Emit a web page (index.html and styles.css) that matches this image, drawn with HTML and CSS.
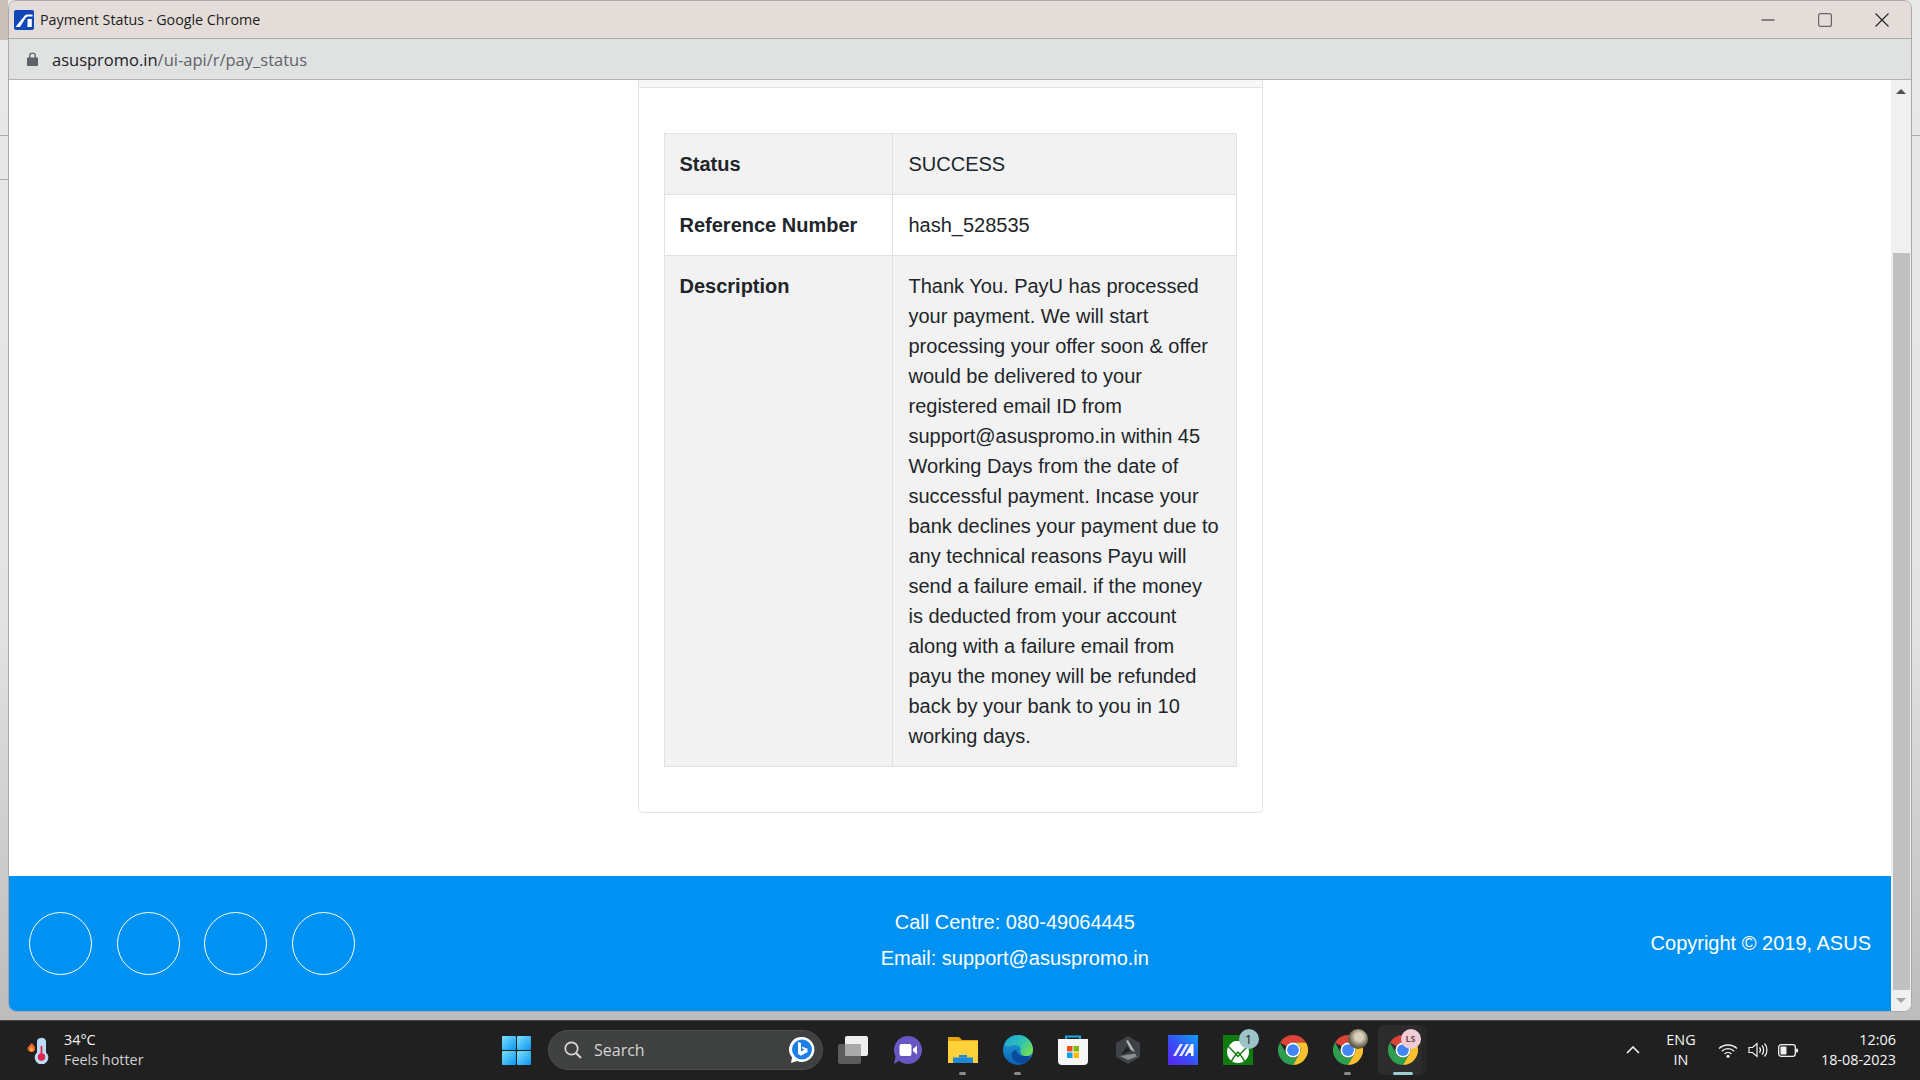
FILE: index.html
```html
<!DOCTYPE html>
<html lang="en">
<head>
    <meta charset="UTF-8">
    <title>Payment Status - Google Chrome</title>
    <link rel="stylesheet" href="styles.css">
</head>
<body>
    <svg class="defs" width="0" height="0">
        <defs>
            <symbol id="chrome" viewBox="0 0 24 24">
                <path fill="#db4437" d="M12 0A12 12 0 0 1 22.4 6H12A6 6 0 0 0 6.8 9L1.6 6A12 12 0 0 1 12 0Z"/>
                <path fill="#2e9e4f" d="M1.6 6L6.8 15A6 6 0 0 0 17.2 15L12 24A12 12 0 0 1 1.6 6Z"/>
                <path fill="#fbc02d" d="M12 6H22.4A12 12 0 0 1 12 24L17.2 15A6 6 0 0 0 12 6Z"/>
                <circle cx="12" cy="12" r="6" fill="#fff"/>
                <circle cx="12" cy="12" r="4.7" fill="#4285f4"/>
            </symbol>
            <linearGradient id="edgeBlue" x1="0" y1="0" x2="0" y2="1">
                <stop offset="0" stop-color="#1fa4e0"/>
                <stop offset="1" stop-color="#0c5fb0"/>
            </linearGradient>
            <linearGradient id="edgeGreen" x1="0" y1="0" x2="1" y2="0.6">
                <stop offset="0" stop-color="#1c9fdc"/>
                <stop offset="0.6" stop-color="#2fc3b0"/>
                <stop offset="1" stop-color="#6fdc5a"/>
            </linearGradient>
            <linearGradient id="winTile" x1="0" y1="0" x2="1" y2="1">
                <stop offset="0" stop-color="#7be2ff"/>
                <stop offset="1" stop-color="#0a94f0"/>
            </linearGradient>
            <linearGradient id="maBg" x1="1" y1="0" x2="0" y2="1">
                <stop offset="0" stop-color="#0aa0ff"/>
                <stop offset="0.55" stop-color="#3a4cf5"/>
                <stop offset="1" stop-color="#5a22f0"/>
            </linearGradient>
        </defs>
    </svg>

    <div class="desktop">
        <div class="window">
            <div class="titlebar">
                <svg class="favicon" viewBox="0 0 20 20">
                    <rect width="20" height="20" rx="2" fill="#0f47b8"/>
                    <path fill="#fff" d="M1.5 17L10 6.5C11 5 12 4.5 14 4.5H18.5V6.5H14.5C13 6.5 12.3 7 11.4 8.2L6 17Z"/>
                    <path fill="#fff" d="M13.6 9H17.8V17H13.4Z"/>
                </svg>
                <span class="title-text">Payment Status - Google Chrome</span>
                <div class="win-controls">
                    <svg viewBox="0 0 14 14"><path d="M0.5 7H13.5" stroke="#222" stroke-width="1.1"/></svg>
                    <svg viewBox="0 0 14 14"><rect x="0.6" y="0.6" width="12.8" height="12.8" rx="2" fill="none" stroke="#666" stroke-width="1.2"/></svg>
                    <svg viewBox="0 0 14 14"><path d="M0.5 0.5L13.5 13.5M13.5 0.5L0.5 13.5" stroke="#222" stroke-width="1.1"/></svg>
                </div>
            </div>
            <div class="addressbar">
                <svg class="lock" viewBox="0 0 11 14">
                    <path fill="#5f6368" d="M2 5.5V3.8C2 1.7 3.4 0.5 5.5 0.5S9 1.7 9 3.8V5.5H10C10.6 5.5 11 5.9 11 6.5V13C11 13.6 10.6 14 10 14H1C0.4 14 0 13.6 0 13V6.5C0 5.9 0.4 5.5 1 5.5ZM3.4 5.5H7.6V3.8C7.6 2.5 6.8 1.8 5.5 1.8S3.4 2.5 3.4 3.8Z"/>
                </svg>
                <span class="url"><span class="url-host">asuspromo.in</span>/ui-api/r/pay_status</span>
            </div>
            <div class="viewport">
                <div class="page">
                    <main class="main">
                        <div class="card">
                            <div class="card-header"></div>
                            <div class="card-body">
                                <table class="status-table">
                                    <tr>
                                        <th>Status</th>
                                        <td>SUCCESS</td>
                                    </tr>
                                    <tr>
                                        <th>Reference Number</th>
                                        <td>hash_528535</td>
                                    </tr>
                                    <tr>
                                        <th>Description</th>
                                        <td>Thank You. PayU has processed your payment. We will start processing your offer soon &amp; offer would be delivered to your registered email ID from support@asuspromo.in within 45 Working Days from the date of successful payment. Incase your bank declines your payment due to any technical reasons Payu will send a failure email. if the money is deducted from your account along with a failure email from payu the money will be refunded back by your bank to you in 10 working days.</td>
                                    </tr>
                                </table>
                            </div>
                        </div>
                    </main>
                    <footer class="footer">
                        <div class="socials">
                            <span class="social"></span>
                            <span class="social"></span>
                            <span class="social"></span>
                            <span class="social"></span>
                        </div>
                        <div class="contact">
                            <div>Call Centre: 080-49064445</div>
                            <div>Email: support@asuspromo.in</div>
                        </div>
                        <div class="copyright">Copyright © 2019, ASUS</div>
                    </footer>
                </div>
                <div class="scrollbar">
                    <span class="arrow-up"></span>
                    <span class="thumb"></span>
                    <span class="arrow-down"></span>
                </div>
            </div>
        </div>
    </div>

    <div class="taskbar">
        <div class="weather">
            <svg class="weather-icon" viewBox="0 0 24 28">
                <path fill="#f0692a" d="M4.5 7C7 9 8.500 11 8 13.500C7.500 15.500 6 16 4.500 16C2.500 16 0.500 14.800 0.500 12.500C0.500 10.500 3 9.500 4.500 7Z"/>
                <path fill="#fbb040" d="M4.500 11C5.800 12 6.300 13 6 14C5.700 15 5 15.300 4.300 15.300C3.300 15.300 2.600 14.600 2.800 13.500C3 12.500 4 12 4.500 11Z"/>
                <path fill="#bcdcf5" d="M14 2A4 4 0 0 1 19 5V16.500A6.800 6.800 0 1 1 10 16.500V5A4 4 0 0 1 14 2Z"/>
                <rect x="13.600" y="10" width="1.800" height="10" fill="#e0244f"/>
                <circle cx="14.500" cy="21" r="3.700" fill="#e0244f"/>
            </svg>
            <div class="weather-text">
                <div class="temp">34°C</div>
                <div class="feels">Feels hotter</div>
            </div>
        </div>

        <div class="taskbar-center">
            <svg class="task-start" viewBox="0 0 29 29">
                <rect width="14" height="14" rx="1" fill="url(#winTile)"/>
                <rect x="15" width="14" height="14" rx="1" fill="url(#winTile)"/>
                <rect y="15" width="14" height="14" rx="1" fill="url(#winTile)"/>
                <rect x="15" y="15" width="14" height="14" rx="1" fill="url(#winTile)"/>
            </svg>
            <div class="searchbox">
                <svg class="search-icon" viewBox="0 0 18 18">
                    <circle cx="7.500" cy="7.500" r="6.200" fill="none" stroke="#d8d8d8" stroke-width="1.700"/>
                    <path d="M12 12L17 17" stroke="#d8d8d8" stroke-width="1.900"/>
                </svg>
                <span class="search-label">Search</span>
                <svg class="bing" viewBox="0 0 26 26">
                    <path fill="#fff" d="M13 0A12.500 12.500 0 1 1 8 24L2 26L3 20.500A12.500 12.500 0 0 1 13 0Z"/>
                    <circle cx="13" cy="12.500" r="10" fill="#1d7ee8"/>
                    <path fill="#fff" d="M9 5L12 6V14.500L15.500 12.800L13.500 11.800L12.800 9.500L18.500 11.800V15L12 18.800L9 17Z"/>
                </svg>
            </div>
            <svg class="task-view" viewBox="0 0 30 28">
                <rect y="8" width="23" height="20" rx="2" fill="#5c5c5c"/>
                <rect x="7" width="23" height="20" rx="2" fill="#efefef"/>
                <rect x="7" y="8" width="16" height="12" rx="1" fill="#a9a9a9"/>
            </svg>
            <span class="task-slot">
                <svg class="task-icon" viewBox="0 0 30 30">
                    <path fill="#6757c2" d="M15 1A14 14 0 1 1 6 25.700L1 29L2.500 21.500A14 14 0 0 1 15 1Z"/>
                    <rect x="6.500" y="9" width="12" height="12" rx="2" fill="#fff"/>
                    <path fill="#fff" d="M20 14L24 10.500V19.500L20 16Z"/>
                </svg>
            </span>
            <span class="task-slot is-running">
                <svg class="task-icon" viewBox="0 0 30 30">
                    <path fill="#e5a50a" d="M0 2H11L14 5H30V27H0Z"/>
                    <rect y="6" width="30" height="22" fill="#ffd13b"/>
                    <path fill="#1e88d8" d="M5 28V22.500H25V28Z"/>
                    <rect x="11" y="20" width="8" height="2.500" fill="#1e88d8"/>
                </svg>
            </span>
            <span class="task-slot is-running">
                <svg class="task-icon" viewBox="0 0 30 30">
                    <circle cx="15" cy="15" r="15" fill="url(#edgeBlue)"/>
                    <path fill="url(#edgeGreen)" d="M15 0A15 15 0 0 1 30 15C30 20 25.500 21.500 22 21C18.500 20.500 16.500 18 17.500 15C18.500 12 15 9.500 11 10C6 10.700 3 14 1.500 8.500A15 15 0 0 1 15 0Z"/>
                    <path fill="#0b4a9a" d="M22 21C17 21 13 18.500 13.500 14.500C8.500 15.500 7 21 11 25C14 28.500 20 29.500 24 26.500C26 25 27 22.500 27 21C25.500 21.200 24 21.200 22 21Z"/>
                </svg>
            </span>
            <span class="task-slot">
                <svg class="task-icon" viewBox="0 0 30 30">
                    <path d="M8 5V1.500H22V5" fill="none" stroke="#21a7e0" stroke-width="2"/>
                    <path fill="#f7f7f7" d="M0 4H30V26C30 28.500 28.500 30 26 30H4C1.500 30 0 28.500 0 26Z"/>
                    <rect x="9" y="11" width="5.500" height="5.500" fill="#f25022"/>
                    <rect x="15.500" y="11" width="5.500" height="5.500" fill="#7fba00"/>
                    <rect x="9" y="17.500" width="5.500" height="5.500" fill="#00a4ef"/>
                    <rect x="15.500" y="17.500" width="5.500" height="5.500" fill="#ffb900"/>
                </svg>
            </span>
            <span class="task-slot">
                <svg class="task-icon" viewBox="0 0 30 30">
                    <path fill="#3e4246" d="M15 1L27 8V22L15 29L3 22V8Z"/>
                    <path fill="#b4b8bc" d="M15 5L22 17L18 15L13 6Z"/>
                    <path fill="#1f2225" d="M14 11L8 20L17 16Z"/>
                    <path fill="#8b8f93" d="M7 21L22 18.500L24 21.500L15 25Z"/>
                </svg>
            </span>
            <span class="task-slot">
                <svg class="task-icon" viewBox="0 0 30 30">
                    <rect width="30" height="30" fill="url(#maBg)"/>
                    <path fill="#e6e6ff" d="M5 21L12 9H15L8 21ZM11 21L18 9H21L14 21Z"/>
                    <path fill="#fff" d="M16.500 21L23 9H25.500V21H23V18H20.500L18.500 21Z"/>
                </svg>
            </span>
            <span class="task-slot">
                <svg class="task-icon" viewBox="0 0 30 30">
                    <rect width="30" height="30" rx="1" fill="#107c10"/>
                    <circle cx="15" cy="17" r="11" fill="#fff"/>
                    <path d="M9 7C11 8.500 13.500 11 15 13C16.500 11 19 8.500 21 7C18 5.500 12 5.500 9 7Z" fill="#fff"/>
                    <path d="M5 11C8 14 11 17 15 21.500C19 17 22 14 25 11M8 27C10 23 12.500 20 15 17C17.500 20 20 23 22 27" fill="none" stroke="#107c10" stroke-width="1.400"/>
                </svg>
                <span class="task-badge badge-count">1</span>
            </span>
            <span class="task-slot">
                <svg class="task-icon"><use href="#chrome"/></svg>
            </span>
            <span class="task-slot is-running">
                <svg class="task-icon"><use href="#chrome"/></svg>
                <span class="task-badge badge-photo"></span>
            </span>
            <span class="task-slot is-active">
                <svg class="task-icon"><use href="#chrome"/></svg>
                <span class="task-badge badge-ls">LS</span>
            </span>
        </div>

        <div class="tray">
            <svg class="tray-chevron" viewBox="0 0 14 8"><path d="M1 7L7 1L13 7" fill="none" stroke="#f2f2f2" stroke-width="1.600"/></svg>
            <div class="lang">
                <div>ENG</div>
                <div>IN</div>
            </div>
            <svg class="tray-wifi" viewBox="0 0 20 15">
                <path d="M1 5.500C6 0.800 14 0.800 19 5.500M3.800 8.200C7.500 4.800 12.500 4.800 16.200 8.200M6.600 10.900C8.500 9.200 11.500 9.200 13.400 10.900" fill="none" stroke="#f2f2f2" stroke-width="1.300"/>
                <circle cx="10" cy="13.200" r="1.500" fill="#f2f2f2"/>
            </svg>
            <svg class="tray-sound" viewBox="0 0 20 16">
                <path d="M1 5.500H4.500L9 1.500V14.500L4.500 10.500H1Z" fill="none" stroke="#f2f2f2" stroke-width="1.200"/>
                <path d="M11.500 5.500C12.800 7 12.800 9 11.500 10.500M14 3.500C16.200 6 16.200 10 14 12.500M16.500 1.500C19.800 5 19.800 11 16.500 14.500" fill="none" stroke="#f2f2f2" stroke-width="1.200"/>
            </svg>
            <svg class="tray-battery" viewBox="0 0 20 13">
                <rect x="0.700" y="0.700" width="16.600" height="11.600" rx="2.500" fill="none" stroke="#f2f2f2" stroke-width="1.300"/>
                <rect x="2.500" y="2.500" width="6" height="8" rx="1" fill="#f2f2f2"/>
                <rect x="18" y="4.500" width="2" height="4" rx="1" fill="#f2f2f2"/>
            </svg>
            <div class="clock">
                <div>12:06</div>
                <div>18-08-2023</div>
            </div>
        </div>
    </div>
</body>
</html>
```

FILE: styles.css
```css
* {
    box-sizing: border-box;
}
body {
    margin: 0;
    width: 1920px;
    height: 1080px;
    overflow: hidden;
    display: flex;
    flex-direction: column;
    font-family: "Liberation Sans", Arial, sans-serif;
    color: #212529;
}
.defs {
    position: absolute;
}

/* desktop behind the browser window */
.desktop {
    height: 1020px;
    padding: 0 8px 8px;
    background:
        linear-gradient(#a9a9a9, #a9a9a9) 0 135px / 100% 1px no-repeat,
        linear-gradient(#a9a9a9, #a9a9a9) 0 179px / 8px 1px no-repeat,
        linear-gradient(#cbbfba, #cbbfba) 0 0 / 8px 40px no-repeat,
        linear-gradient(to bottom, #e9e9e9 0, #e4e4e4 60%, #bdbdbd 99%);
}
.window {
    height: 100%;
    border: 1px solid #a8a8a8;
    border-radius: 8px;
    overflow: hidden;
    display: flex;
    flex-direction: column;
    background: #fff;
}
.titlebar {
    height: 38px;
    flex: none;
    display: flex;
    align-items: center;
    padding-left: 5px;
    background: #e3dcd9;
    border-bottom: 1px solid #a9a9a9;
}
.favicon {
    width: 20px;
    height: 20px;
}
.title-text {
    margin-left: 6px;
    font-family: "Open Sans", sans-serif;
    font-size: 14.3px;
    color: #1c1c1c;
}
.win-controls {
    margin-left: auto;
    display: flex;
    gap: 43px;
    padding-right: 22px;
}
.win-controls svg {
    width: 14px;
    height: 14px;
}
.addressbar {
    height: 41px;
    flex: none;
    display: flex;
    align-items: center;
    padding-left: 18px;
    background: #e0e1e1;
    border-bottom: 1px solid #b4b4b4;
}
.lock {
    width: 11px;
    height: 14px;
}
.url {
    margin-left: 14px;
    padding-top: 1px;
    font-family: "Open Sans", sans-serif;
    font-size: 16.5px;
    color: #5f6368;
}
.url-host {
    color: #202124;
}

.viewport {
    flex: 1;
    min-height: 0;
    display: flex;
}
.page {
    flex: 1;
    display: flex;
    flex-direction: column;
}
.main {
    flex: 1;
    display: flex;
    justify-content: center;
}
.card {
    width: 625px;
    height: 733px;
    border: 1px solid #e1e3e6;
    border-top: none;
    border-radius: 0 0 5px 5px;
}
.card-header {
    height: 8px;
    background: #f7f7f7;
    border-bottom: 1px solid #e1e3e6;
}
.card-body {
    padding: 45px 25px;
}
.status-table {
    width: 573px;
    border-collapse: collapse;
    table-layout: fixed;
    font-size: 20px;
    line-height: 30px;
}
.status-table th,
.status-table td {
    padding: 15px;
    border: 1px solid #dee2e6;
    text-align: left;
    vertical-align: top;
}
.status-table td {
    padding-left: 16px;
    padding-right: 14px;
}
.status-table th {
    width: 228px;
    font-weight: bold;
}
.status-table tr:nth-child(odd) {
    background: #f2f2f2;
}

.footer {
    height: 135px;
    flex: none;
    display: flex;
    align-items: center;
    padding: 0 20px;
    background: #0092f3;
    color: #fff;
    font-size: 20px;
}
.socials {
    width: 350px;
    display: flex;
    gap: 24.6px;
}
.social {
    width: 63px;
    height: 63px;
    border: 1px solid #fff;
    border-radius: 50%;
}
.contact {
    flex: 1;
    padding-bottom: 8px;
    text-align: center;
    line-height: 36px;
}

.scrollbar {
    width: 20px;
    flex: none;
    display: flex;
    flex-direction: column;
    align-items: center;
    background: #f0f0f0;
}
.arrow-up {
    margin-top: 9px;
    border-left: 5px solid transparent;
    border-right: 5px solid transparent;
    border-bottom: 5px solid #505050;
}
.thumb {
    width: 17px;
    height: 737px;
    margin-top: 159px;
    background: #c0c0c0;
}
.arrow-down {
    margin-top: 8px;
    border-left: 5px solid transparent;
    border-right: 5px solid transparent;
    border-top: 5px solid #a3a3a3;
}

/* taskbar */
.taskbar {
    height: 60px;
    flex: none;
    display: flex;
    align-items: center;
    padding-bottom: 1px;
    background: #202020;
    border-top: 1px solid #4a4a4a;
    color: #f5f5f5;
    font-family: "Open Sans", sans-serif;
    font-size: 14.4px;
    line-height: 20px;
}
.weather {
    width: 502px;
    flex: none;
    display: flex;
    align-items: center;
    padding-left: 27px;
}
.weather-icon {
    width: 24px;
    height: 28px;
}
.weather-text {
    margin-left: 13px;
    padding-bottom: 1px;
}
.feels {
    color: #d0d0d0;
}
.taskbar-center {
    display: flex;
    align-items: center;
}
.task-start {
    width: 29px;
    height: 29px;
}
.searchbox {
    width: 275px;
    height: 40px;
    margin-left: 17px;
    display: flex;
    align-items: center;
    padding: 0 7px 0 15px;
    background: #3f4040;
    border: 1px solid #4d4d4d;
    border-radius: 20px;
}
.search-icon {
    width: 18px;
    height: 18px;
}
.search-label {
    margin-left: 12px;
    font-size: 16px;
    color: #d4d4d4;
}
.bing {
    width: 26px;
    height: 26px;
    margin-left: auto;
}
.task-view {
    width: 30px;
    height: 28px;
    margin: 0 12px 0 15px;
}
.task-slot {
    width: 55px;
    height: 50px;
    display: flex;
    align-items: center;
    justify-content: center;
    position: relative;
}
.task-icon {
    width: 30px;
    height: 30px;
}
.task-slot.is-running::after,
.task-slot.is-active::after {
    content: "";
    position: absolute;
    left: 50%;
    bottom: 0;
    width: 7px;
    height: 3px;
    margin-left: -3.5px;
    border-radius: 2px;
    background: #8a8a8a;
}
.task-slot.is-active {
    width: 44px;
    margin-left: 2.5px;
    padding-left: 6px;
    background: #2c2c2c;
    border-radius: 5px;
    box-shadow: 5px 0 0 #262626;
}
.task-slot.is-active::after {
    left: 25px;
    width: 20px;
    margin-left: -10px;
    background: #9fcdd1;
}
.task-badge {
    position: absolute;
    width: 20px;
    height: 20px;
    top: 4px;
    border-radius: 50%;
    display: flex;
    align-items: center;
    justify-content: center;
}
.badge-count {
    left: 28.5px;
    background: #9cc3c8;
    color: #1c1c1c;
    font-size: 13px;
}
.badge-photo {
    left: 27.5px;
    background: radial-gradient(circle at 55% 40%, #d8d0bc 0 25%, #6a6450 60%, #3a3428 100%);
}
.badge-ls {
    left: 23px;
    background: #f0cdd6;
    color: #6e4a52;
    font-size: 9px;
    font-weight: bold;
}
.tray {
    margin-left: auto;
    display: flex;
    align-items: center;
    padding-right: 24px;
}
.tray-chevron {
    width: 14px;
    height: 8px;
}
.lang {
    width: 40px;
    margin-left: 21px;
    text-align: center;
}
.tray-wifi {
    width: 20px;
    height: 15px;
    margin-left: 17px;
}
.tray-sound {
    width: 20px;
    height: 16px;
    margin-left: 10px;
}
.tray-battery {
    width: 20px;
    height: 13px;
    margin-left: 10px;
}
.clock {
    width: 98px;
    padding-bottom: 1px;
    text-align: right;
}
```
